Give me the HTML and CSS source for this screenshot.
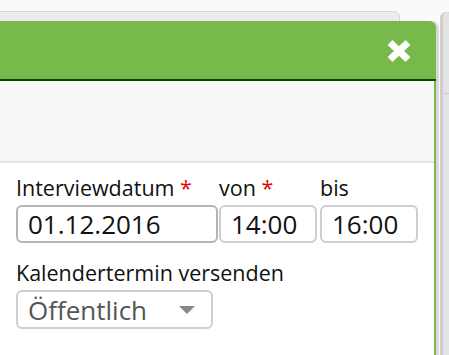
FILE: index.html
```html
<!DOCTYPE html>
<html lang="de">
<head>
    <meta charset="UTF-8">
    <title>Interview</title>
    <link rel="stylesheet" href="styles.css">
</head>
<body>
    <div class="backdrop">
        <div class="back-panel"></div>
        <div class="side-panel"></div>
    </div>

    <div class="dialog">
        <div class="dialog-header">
            <svg class="close" width="26" height="24" viewBox="0 0 26 24">
                <path d="M4 3.5 L22 20.5 M22 3.5 L4 20.5" stroke="#fff" stroke-width="7"/>
            </svg>
        </div>
        <div class="dialog-toolbar"></div>
        <form class="dialog-body">
            <div class="row">
                <div class="field field-date">
                    <label>Interviewdatum <span class="req">*</span></label>
                    <input type="text" class="input focused" value="01.12.2016">
                </div>
                <div class="field field-time">
                    <label>von <span class="req">*</span></label>
                    <input type="text" class="input" value="14:00">
                </div>
                <div class="field field-time field-end">
                    <label>bis</label>
                    <input type="text" class="input" value="16:00">
                </div>
            </div>
            <div class="field field-select">
                <label>Kalendertermin versenden</label>
                <div class="select">
                    <span>Öffentlich</span>
                    <span class="caret"></span>
                </div>
            </div>
        </form>
    </div>
</body>
</html>
```
FILE: styles.css
```css
body {
    margin: 0;
    width: 449px;
    height: 355px;
    overflow: hidden;
    background: #fafafa;
    font-family: 'Open Sans', sans-serif;
    color: #111;
    position: relative;
}

.back-panel {
    position: absolute;
    left: -10px;
    top: 11px;
    width: 408px;
    height: 60px;
    background: linear-gradient(#ececec, #e4e4e4);
    border: 1px solid #d6d6d6;
    border-radius: 6px;
}

.side-panel {
    position: absolute;
    left: 440px;
    top: 12px;
    width: 20px;
    height: 343px;
    background: #e3e3e3;
    border-left: 3px solid #cfcfcf;
    border-top: 1px solid #d6d6d6;
    border-radius: 6px 0 0 0;
}

.side-panel::after {
    content: "";
    position: absolute;
    left: 0;
    right: 0;
    top: 80px;
    height: 1px;
    background: #cdcdcd;
}

.dialog {
    position: absolute;
    left: -10px;
    top: 21px;
    width: 444px;
    height: 334px;
    background: #fff;
    border-right: 2px solid #77b94a;
    box-shadow: 3px 0 0 #d8d8d8;
    border-radius: 0 7px 0 0;
}

.dialog-header {
    height: 58px;
    margin-right: -2px;
    background: #77b94a;
    border-bottom: 2px solid #004d00;
    border-radius: 0 7px 0 0;
    display: flex;
    justify-content: flex-end;
    align-items: center;
    padding-right: 24px;
}

.close {
    display: block;
    margin-top: 2px;
}

.dialog-toolbar {
    height: 80px;
    background: #f7f7f7;
    border-bottom: 2px solid #e5e5e5;
}

.dialog-body {
    padding: 12px 0 0 26px;
}

.row {
    display: flex;
    gap: 1px;
}

.field {
    display: flex;
    flex-direction: column;
}

label {
    font-size: 21.5px;
    line-height: 26px;
    margin-bottom: 4px;
    white-space: nowrap;
}

.req {
    color: #e00;
}

.input {
    box-sizing: border-box;
    height: 38px;
    border: 2px solid #cfcfcf;
    border-radius: 6px;
    font-family: 'Open Sans', sans-serif;
    font-size: 26px;
    color: #111;
    padding: 0 10px;
}

.input.focused {
    border-color: #b4b4b4;
}

.field-date .input {
    width: 202px;
}

.field-time .input {
    width: 98px;
}

.field-end {
    margin-left: 2px;
}

.field-select {
    margin-top: 17px;
}

.select {
    box-sizing: border-box;
    width: 197px;
    height: 39px;
    border: 2px solid #cfcfcf;
    border-radius: 6px;
    display: flex;
    align-items: center;
    justify-content: space-between;
    padding: 0 16px 0 10px;
    font-size: 26px;
    color: #555;
}

.caret {
    width: 0;
    height: 0;
    border-left: 8px solid transparent;
    border-right: 8px solid transparent;
    border-top: 8px solid #888;
}
```
